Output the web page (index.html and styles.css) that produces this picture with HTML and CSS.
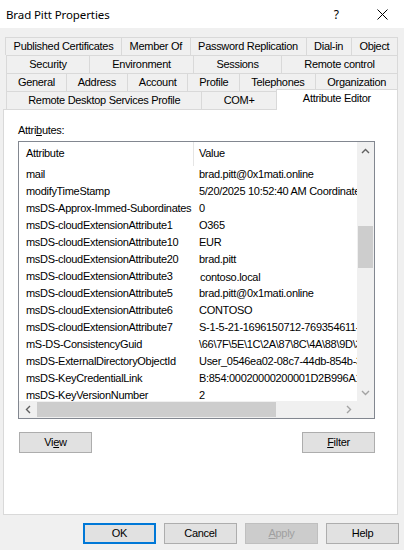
FILE: index.html
```html
<!DOCTYPE html>
<html>
<head>
<meta charset="utf-8">
<link rel="stylesheet" href="styles.css">
</head>
<body>
<div class="window">
  <div class="titlebar">
    <span class="title">Brad Pitt Properties</span>
    <span class="help">?</span>
    <svg class="close" width="11" height="11" viewBox="0 0 11 11"><path d="M0.5 0.5 L10.5 10.5 M10.5 0.5 L0.5 10.5" stroke="#000" stroke-width="1" fill="none"/></svg>
  </div>
  <div class="tabs">
    <div class="tabrow">
      <div class="tab">Published Certificates</div>
      <div class="tab">Member Of</div>
      <div class="tab">Password Replication</div>
      <div class="tab">Dial-in</div>
      <div class="tab">Object</div>
    </div>
    <div class="tabrow">
      <div class="tab">Security</div>
      <div class="tab">Environment</div>
      <div class="tab">Sessions</div>
      <div class="tab">Remote control</div>
    </div>
    <div class="tabrow">
      <div class="tab">General</div>
      <div class="tab">Address</div>
      <div class="tab">Account</div>
      <div class="tab">Profile</div>
      <div class="tab">Telephones</div>
      <div class="tab">Organization</div>
    </div>
    <div class="tabrow">
      <div class="tab">Remote Desktop Services Profile</div>
      <div class="tab">COM+</div>
      <div class="tab selected">Attribute Editor</div>
    </div>
  </div>
  <div class="panel">
    <div class="label">Attri<u>b</u>utes:</div>
    <div class="listbox">
      <div class="listview">
        <div class="lv-header"><div class="col-attr">Attribute</div><div class="col-val">Value</div></div>
        <div class="lv-row"><div class="col-attr">mail</div><div class="col-val">brad.pitt@0x1mati.online</div></div>
        <div class="lv-row"><div class="col-attr">modifyTimeStamp</div><div class="col-val">5/20/2025 10:52:40 AM Coordinated Universal Time</div></div>
        <div class="lv-row"><div class="col-attr">msDS-Approx-Immed-Subordinates</div><div class="col-val">0</div></div>
        <div class="lv-row"><div class="col-attr">msDS-cloudExtensionAttribute1</div><div class="col-val">O365</div></div>
        <div class="lv-row"><div class="col-attr">msDS-cloudExtensionAttribute10</div><div class="col-val">EUR</div></div>
        <div class="lv-row"><div class="col-attr">msDS-cloudExtensionAttribute20</div><div class="col-val">brad.pitt</div></div>
        <div class="lv-row"><div class="col-attr">msDS-cloudExtensionAttribute3</div><div class="col-val shifted">contoso.local</div></div>
        <div class="lv-row"><div class="col-attr">msDS-cloudExtensionAttribute5</div><div class="col-val">brad.pitt@0x1mati.online</div></div>
        <div class="lv-row"><div class="col-attr">msDS-cloudExtensionAttribute6</div><div class="col-val">CONTOSO</div></div>
        <div class="lv-row"><div class="col-attr">msDS-cloudExtensionAttribute7</div><div class="col-val">S-1-5-21-1696150712-769354611-1234567890-1105</div></div>
        <div class="lv-row"><div class="col-attr">mS-DS-ConsistencyGuid</div><div class="col-val">\66\7F\5E\1C\2A\87\8C\4A\88\9D\3E\21</div></div>
        <div class="lv-row"><div class="col-attr">msDS-ExternalDirectoryObjectId</div><div class="col-val">User_0546ea02-08c7-44db-854b-3a1f</div></div>
        <div class="lv-row"><div class="col-attr">msDS-KeyCredentialLink</div><div class="col-val">B:854:00020000200001D2B996A1F3</div></div>
        <div class="lv-row"><div class="col-attr">msDS-KeyVersionNumber</div><div class="col-val">2</div></div>
      </div>
      <div class="vscroll">
        <div class="sbtn"><svg width="9" height="6" viewBox="0 0 9 6"><polyline points="1,5 4.5,1.5 8,5" fill="none" stroke="#606060" stroke-width="1.4"/></svg></div>
        <div class="vtrack"><div class="vthumb"></div></div>
        <div class="sbtn"><svg width="9" height="6" viewBox="0 0 9 6"><polyline points="1,1 4.5,4.5 8,1" fill="none" stroke="#a3a3a3" stroke-width="1.4"/></svg></div>
      </div>
      <div class="hscroll">
        <div class="sbtn"><svg width="6" height="9" viewBox="0 0 6 9"><polyline points="5,1 1.5,4.5 5,8" fill="none" stroke="#606060" stroke-width="1.4"/></svg></div>
        <div class="htrack"><div class="hthumb"></div></div>
        <div class="sbtn"><svg width="6" height="9" viewBox="0 0 6 9"><polyline points="1,1 4.5,4.5 1,8" fill="none" stroke="#a3a3a3" stroke-width="1.4"/></svg></div>
      </div>
      <div class="corner"></div>
    </div>
    <div class="panel-buttons">
      <div class="btn">Vi<u>e</u>w</div>
      <div class="btn"><u>F</u>ilter</div>
    </div>
  </div>
  <div class="footer">
    <div class="btn default">OK</div>
    <div class="btn">Cancel</div>
    <div class="btn disabled"><u>A</u>pply</div>
    <div class="btn">Help</div>
  </div>
</div>
</body>
</html>
```
FILE: styles.css
```css
* { box-sizing: border-box; }
html, body { margin: 0; padding: 0; }
body { width: 404px; height: 550px; overflow: hidden; background: #f0f0f0; }
.window {
  width: 404px; height: 550px; background: #f0f0f0;
  font-family: "Liberation Sans", Arial, sans-serif; font-size: 11px; color: #000;
  letter-spacing: -0.3px;
  display: flex; flex-direction: column;
}
.titlebar {
  height: 28px; background: #fff; display: flex; align-items: center;
  padding-left: 6px; letter-spacing: 0;
}
.title { font-family: "Noto Sans", "Open Sans", sans-serif; font-size: 11.5px; letter-spacing: -0.1px; flex: 1; }
.help { font-family: "Noto Sans", sans-serif; font-size: 12px; margin-right: 38px; }
.close { margin-right: 16px; display: block; }

.tabs { margin-top: 9px; padding: 0 6px 0 6px; }
.tabrow { display: flex; height: 18px; }
.tabrow:first-child { margin-left: -1px; }
.tab {
  flex: 1 1 auto; height: 18px; line-height: 17px; text-align: center;
  border: 1px solid #d9d9d9; border-bottom: none; margin-left: -1px;
  padding: 0 7px; white-space: nowrap; background: #f0f0f0;
}
.tab:first-child { margin-left: 0; }
.tab.selected {
  background: #fff; height: 21px; margin-top: -2px; position: relative;
  line-height: 17px; padding: 0 12px;
}

.panel {
  margin: 0 6px 0 3px; height: 406px; background: #fff;
  border: 1px solid #d9d9d9; display: flex; flex-direction: column;
  padding: 0 23px 0 14px;
}
.label { margin-top: 13px; height: 14px; line-height: 14px; }
.listbox {
  margin-top: 4px; width: 357px; height: 278px; border: 1px solid #828790;
  display: grid; grid-template-columns: 1fr 17px; grid-template-rows: 1fr 17px;
}
.listview { overflow: hidden; white-space: nowrap; }
.lv-header { display: flex; height: 24px; line-height: 22px; }
.lv-header .col-attr { border-right: 1px solid #e5e5e5; }
.lv-row { display: flex; height: 17px; line-height: 17px; }
.col-attr { flex: 0 0 175px; padding-left: 7px; overflow: hidden; }
.col-val { flex: 0 0 auto; padding-left: 5px; }
.col-val.shifted { padding-left: 6px; padding-top: 1px; }

.vscroll { background: #f0f0f0; display: flex; flex-direction: column; }
.hscroll { background: #f0f0f0; display: flex; }
.corner { background: #f0f0f0; }
.sbtn { flex: 0 0 17px; height: 17px; display: flex; align-items: center; justify-content: center; }
.sbtn svg { display: block; }
.vtrack { flex: 1; padding: 67px 1px 0 1px; }
.vthumb { height: 42px; background: #cdcdcd; }
.htrack { flex: 1; padding: 1px 0 1px 1px; }
.hthumb { width: 239px; height: 100%; background: #cdcdcd; }

.panel-buttons { display: flex; justify-content: space-between; margin-top: 13px; width: 357px; padding-left: 1px; }
.btn {
  width: 73px; height: 21px; line-height: 19px; text-align: center;
  background: #e1e1e1; border: 1px solid #adadad;
}
.footer { display: flex; justify-content: flex-end; gap: 8px; margin-top: 8px; padding-right: 5px; }
.btn.default { border: 2px solid #0078d7; line-height: 17px; }
.btn.disabled { background: #cccccc; border-color: #bfbfbf; color: #a0a0a0; }
```
